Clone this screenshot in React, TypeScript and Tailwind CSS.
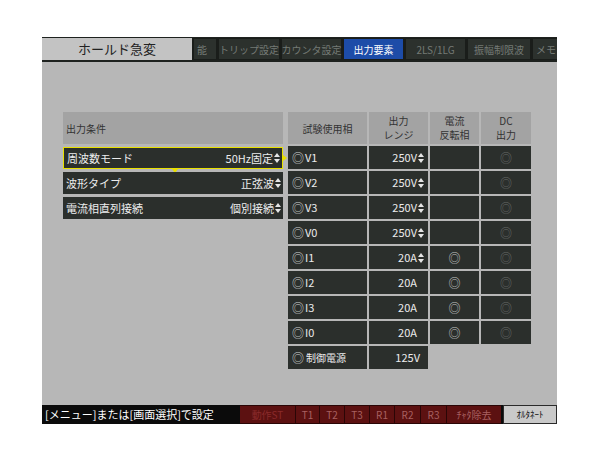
const font = { fontFamily: '"Noto Sans CJK JP", "Noto Sans", sans-serif' };

const tabs = [
  { label: "能", w: "w-[22px]", align: "justify-start pl-[3px]" },
  { label: "トリップ設定", w: "w-[60px]", align: "justify-center" },
  { label: "カウンタ設定", w: "w-[59px]", align: "justify-center" },
  { label: "出力要素", w: "w-[59px]", align: "justify-center", active: true },
  { label: "2LS/1LG", w: "w-[59px]", align: "justify-center" },
  { label: "振幅制限波", w: "w-[62px]", align: "justify-center" },
  { label: "メモ", w: "w-[40px]", align: "justify-start pl-[3px]" },
];

const conditions = [
  { label: "周波数モード", value: "50Hz固定", selected: true },
  { label: "波形タイプ", value: "正弦波" },
  { label: "電流相直列接続", value: "個別接続" },
];

const rows = [
  { name: "V1", range: "250V", arrow: true, rev: false },
  { name: "V2", range: "250V", arrow: true, rev: false },
  { name: "V3", range: "250V", arrow: true, rev: false },
  { name: "V0", range: "250V", arrow: true, rev: false },
  { name: "I1", range: "20A", arrow: true, rev: true },
  { name: "I2", range: "20A", arrow: false, rev: true },
  { name: "I3", range: "20A", arrow: false, rev: true },
  { name: "I0", range: "20A", arrow: false, rev: true },
];

const footerButtons = [
  { label: "動作ST", w: "w-[55px]", dim: true },
  { label: "T1", w: "w-[23px]" },
  { label: "T2", w: "w-[24px]" },
  { label: "T3", w: "w-[24px]" },
  { label: "R1", w: "w-[24px]" },
  { label: "R2", w: "w-[25px]" },
  { label: "R3", w: "w-[25px]" },
  { label: "ﾁｬﾀ除去", w: "w-[54px]" },
];

function UpDown() {
  return (
    <svg width="6" height="10" viewBox="0 0 6 10" className="ml-[1px] shrink-0">
      <path d="M3 0 L6 4 L0 4 Z" fill="#e6e6e6" />
      <path d="M0 6 L6 6 L3 10 Z" fill="#e6e6e6" />
    </svg>
  );
}

function Ring({ color }: { color: string }) {
  return <span className={`text-[12px] leading-none ${color}`}>◎</span>;
}

export default function App() {
  return (
    <div className="min-h-[458px] w-[600px] bg-white pl-[42px] pt-[37px]" style={font}>
      <div className="flex h-[387px] w-[515px] flex-col bg-[#b7b7b7]">
        {/* Top bar */}
        <div className="flex h-[25px] border-t border-b-2 border-[#1e221f]">
          <div className="flex w-[150px] items-center justify-center bg-[#c3c3c3] text-[13px] text-[#222]">
            ホールド急変
          </div>
          <div className="flex flex-1 gap-[3px] overflow-hidden bg-[#1a1d1a] py-[1px] pl-[2px]">
            {tabs.map((t) => (
              <div
                key={t.label}
                className={`flex shrink-0 items-center ${t.w} ${t.align} text-[10px] whitespace-nowrap ${
                  t.active ? "bg-[#1d4ca8] text-white" : "bg-[#2c312d] text-[#747a75]"
                }`}
              >
                {t.label}
              </div>
            ))}
          </div>
        </div>

        {/* Content */}
        <div className="flex flex-1 gap-[5px] pl-[21px] pt-[50px]">
          {/* Left panel */}
          <div className="flex w-[220px] flex-col gap-[3px] self-start">
            <div className="flex h-[32px] items-center bg-[#a3a3a3] pl-[3px] text-[10px] text-[#333]">
              出力条件
            </div>
            {conditions.map((c) => (
              <div
                key={c.label}
                className={`relative flex h-[22px] items-center justify-between bg-[#2b2f2c] pl-[3px] pr-[2px] text-[11px] text-[#ececec] ${
                  c.selected ? "border border-[#e8e000]" : ""
                }`}
              >
                <span>{c.label}</span>
                <span className="flex items-center">
                  {c.value}
                  <UpDown />
                </span>
                {c.selected && (
                  <>
                    <span className="absolute right-[-5px] top-[7px] h-0 w-0 border-y-[3px] border-l-[4px] border-y-transparent border-l-[#e8e000]" />
                    <span className="absolute bottom-[-5px] left-[108px] h-0 w-0 border-x-[3px] border-t-[4px] border-x-transparent border-t-[#e8e000]" />
                  </>
                )}
              </div>
            ))}
          </div>

          {/* Table */}
          <div className="grid w-[243px] grid-cols-[79px_59px_49px_50px] gap-[2px] self-start text-[11px]">
            <div className="flex h-[32px] items-center justify-center bg-[#a3a3a3] text-[10px] text-[#333]">
              試験使用相
            </div>
            <div className="flex h-[32px] flex-col items-center justify-center bg-[#a3a3a3] text-[10px] leading-[14px] text-[#333]">
              <span>出力</span>
              <span>レンジ</span>
            </div>
            <div className="flex h-[32px] flex-col items-center justify-center bg-[#a3a3a3] text-[10px] leading-[14px] text-[#333]">
              <span>電流</span>
              <span>反転相</span>
            </div>
            <div className="flex h-[32px] flex-col items-center justify-center bg-[#a3a3a3] text-[10px] leading-[14px] text-[#333]">
              <span>DC</span>
              <span>出力</span>
            </div>
            {rows.map((r) => (
              <div key={r.name} className="contents">
                <div className="flex h-[23px] items-center gap-[1px] bg-[#2b2f2c] pl-[4px] text-[#ececec]">
                  <Ring color="text-[#cfcfcf]" />
                  <span>{r.name}</span>
                </div>
                <div className="flex h-[23px] items-center justify-end bg-[#2b2f2c] pr-[4px] text-[#ececec]">
                  <span>{r.range}</span>
                  {r.arrow ? <UpDown /> : <span className="ml-[1px] w-[6px]" />}
                </div>
                <div className="flex h-[23px] items-center justify-center bg-[#2b2f2c]">
                  {r.rev && <Ring color="text-[#c4c4c4]" />}
                </div>
                <div className="flex h-[23px] items-center justify-center bg-[#2b2f2c]">
                  <Ring color="text-[#666a67]" />
                </div>
              </div>
            ))}
            <div className="flex h-[23px] items-center gap-[2px] bg-[#2b2f2c] pl-[4px] text-[10px] text-[#ececec]">
              <Ring color="text-[#cfcfcf]" />
              <span>制御電源</span>
            </div>
            <div className="flex h-[23px] items-center justify-end bg-[#2b2f2c] pr-[8px] text-[#ececec]">
              125V
            </div>
          </div>
        </div>

        {/* Bottom bar */}
        <div className="flex h-[19px] items-stretch bg-[#0b0b0b]">
          <div className="flex w-[198px] items-center pl-[3px] text-[11px] text-white whitespace-nowrap">
            [メニュー]または[画面選択]で設定
          </div>
          <div className="flex gap-[1px] bg-[#2a0606] py-[1px]">
            {footerButtons.map((b) => (
              <div
                key={b.label}
                className={`flex ${b.w} items-center justify-center bg-[#5c1111] text-[10px] ${
                  b.dim ? "text-[#8a2a2a]" : "text-[#a86060]"
                }`}
              >
                {b.label}
              </div>
            ))}
          </div>
          <div className="ml-[2px] flex flex-1 items-center justify-center border border-[#2a2a2a] bg-[#c9c9c9] text-[9px] text-[#111]">
            ｵﾙﾀﾈｰﾄ
          </div>
        </div>
      </div>
    </div>
  );
}
